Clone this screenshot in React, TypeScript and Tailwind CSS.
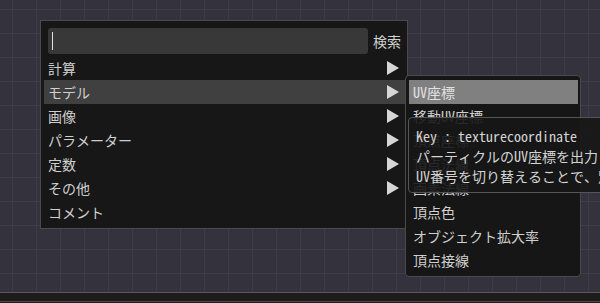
const font = "font-['Noto_Sans_Mono_CJK_JP','Noto_Sans_CJK_JP',monospace]";

const categories = [
  { label: "計算", sub: true },
  { label: "モデル", sub: true, active: true },
  { label: "画像", sub: true },
  { label: "パラメーター", sub: true },
  { label: "定数", sub: true },
  { label: "その他", sub: true },
  { label: "コメント", sub: false },
];

const modelNodes = [
  "UV座標",
  "移動UV座標",
  "頂点座標",
  "頂点法線",
  "画素法線",
  "頂点色",
  "オブジェクト拡大率",
  "頂点接線",
];

function Arrow() {
  return (
    <svg width="12" height="14" viewBox="0 0 12 14" className="shrink-0">
      <path d="M0 0 L12 7 L0 14 Z" fill="#d6d6d6" />
    </svg>
  );
}

export default function App() {
  return (
    <div
      className={`relative w-[600px] h-[303px] overflow-hidden bg-[#33323d] text-[14px] text-[#cfcfcf] ${font} bg-[linear-gradient(to_right,#3d3c48_1px,transparent_1px),linear-gradient(to_bottom,#3d3c48_1px,transparent_1px)] [background-size:24px_24px] [background-position:12px_9px]`}
    >
      {/* bottom bar */}
      <div className="absolute left-0 right-0 top-[292px] h-[11px] border-t border-[#5a5960] bg-[#1e1b1b]">
        <div className="mt-[8px] h-px bg-[#4a4950]" />
      </div>

      {/* node search menu */}
      <div className="absolute left-[40px] top-[20px] w-[368px] h-[209px] border border-[#4a4a4a] bg-[#171717]">
        <div className="flex items-center h-[26px] gap-[5px] mx-[7px] mt-[7px]">
          <div className="flex items-center w-[320px] shrink-0 h-[26px] rounded-[3px] bg-[#383838] pl-[4px]">
            <div className="w-px h-[18px] bg-[#e0e0e0]" />
          </div>
          <span className="leading-none whitespace-nowrap">検索</span>
        </div>
        <div className="mt-[2px] ml-[3px] mr-px">
          {categories.map((c) => (
            <div
              key={c.label}
              className={`flex items-center justify-between h-[24px] pl-[4px] pr-[7px] ${c.active ? "bg-[#404040]" : ""}`}
            >
              <span>{c.label}</span>
              {c.sub && <Arrow />}
            </div>
          ))}
        </div>
      </div>

      {/* submenu */}
      <div className="absolute left-[405px] top-[75px] w-[176px] h-[202px] rounded-[4px] border border-[#4a4a4a] bg-[#161616] pt-[4px] pl-[3px] pr-[2px]">
        {modelNodes.map((n, i) => (
          <div
            key={n}
            className={`flex items-center h-[24px] pl-[4px] ${i === 0 ? "bg-[#808080] text-[#e2e2e2]" : ""}`}
          >
            {n}
          </div>
        ))}
      </div>

      {/* tooltip */}
      <div className="absolute left-[408px] top-[117px] w-[240px] h-[76px] rounded-[4px] border border-[#555555] bg-[#161616]/90 pl-[7px] pt-[8px] leading-[20px] whitespace-nowrap text-[#d4d4d4]">
        <div>Key : texturecoordinate</div>
        <div>パーティクルのUV座標を出力します。</div>
        <div>UV番号を切り替えることで、別のUVを取得できます。</div>
      </div>
    </div>
  );
}
